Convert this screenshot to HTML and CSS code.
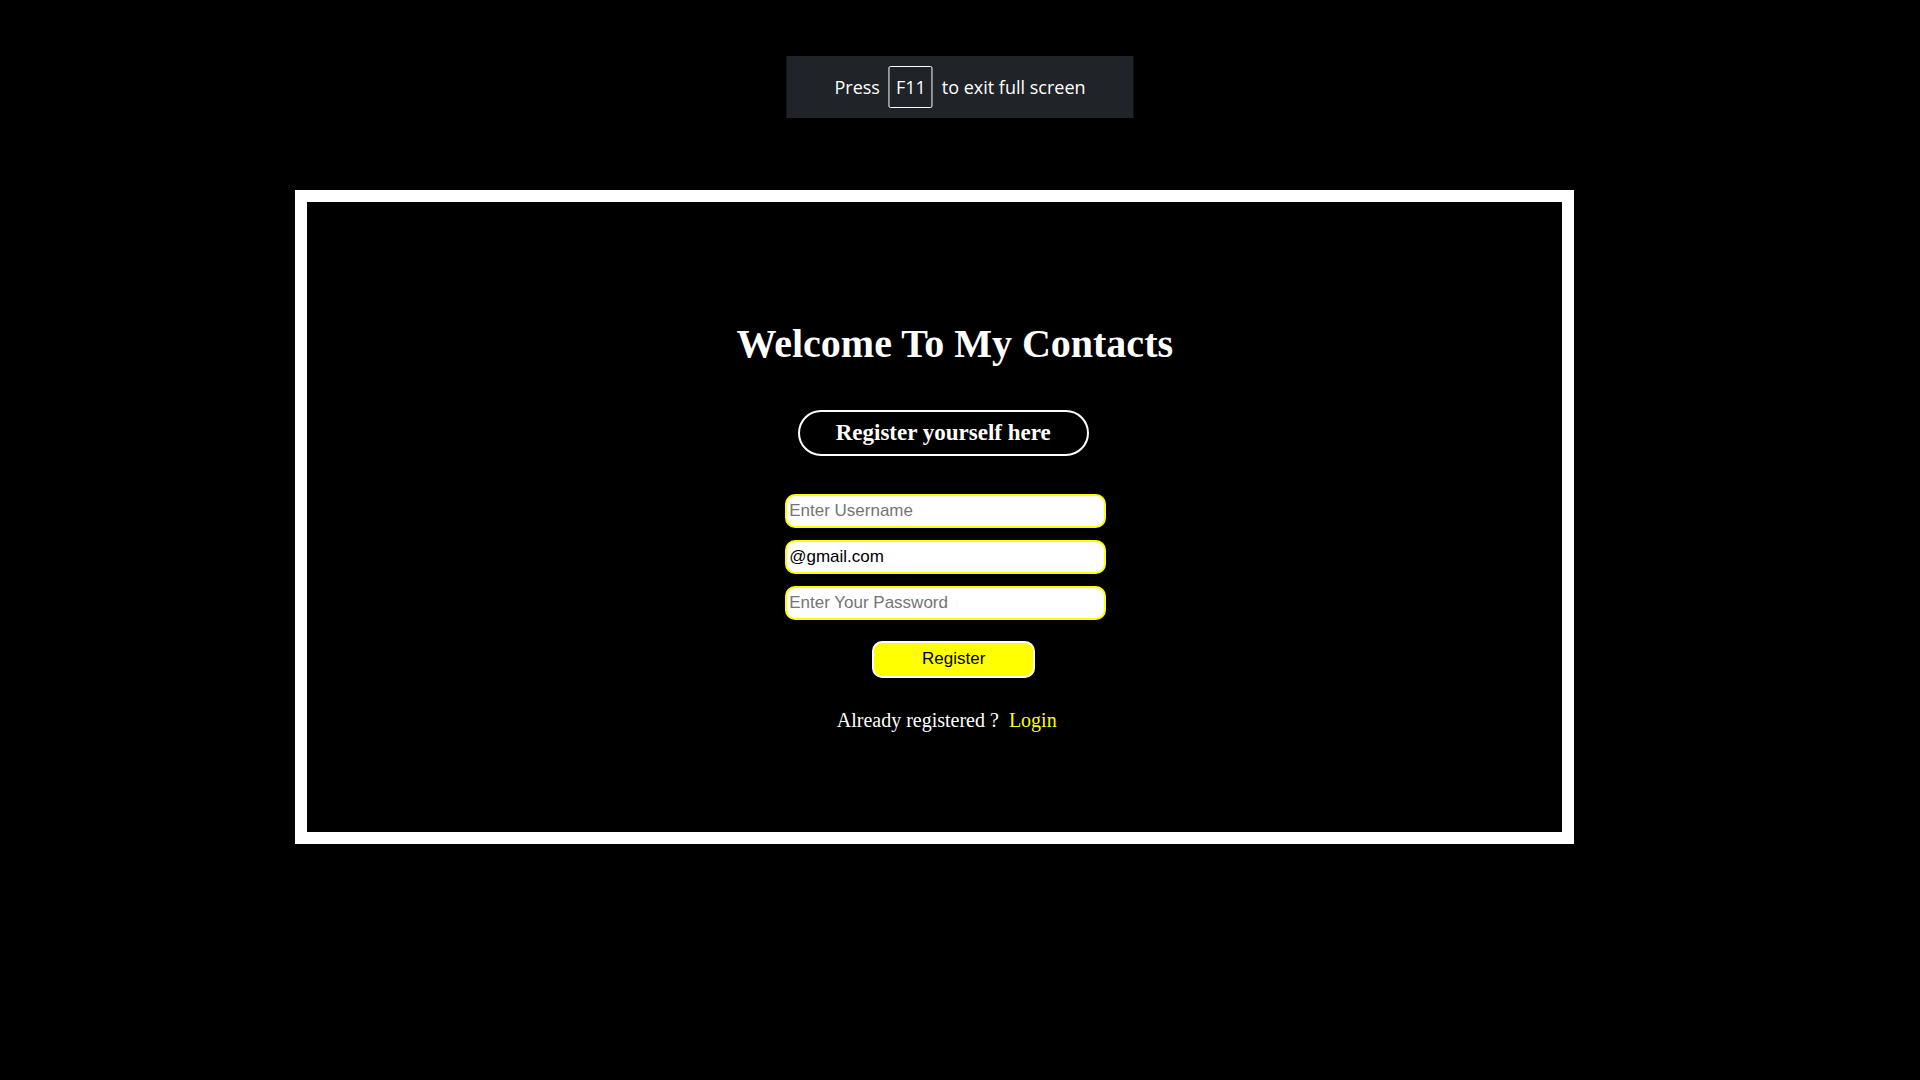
FILE: index.html
```html
<!DOCTYPE html>
<html lang="en">
<head>
  <meta charset="utf-8">
  <meta name="viewport" content="width=device-width, initial-scale=1">
  <title>My Contacts - Register</title>
  <link rel="stylesheet" href="styles.css">
</head>
<body>
  <div class="toast" role="status"><span>Press</span><kbd class="key">F11</kbd><span>to exit full screen</span></div>
  <main class="frame">
    <h1 class="title">Welcome To My Contacts</h1>
    <h2 class="subtitle">Register yourself here</h2>
    <form class="form">
      <input class="field" type="text" name="username" aria-label="Username" placeholder="Enter Username">
      <input class="field" type="text" name="email" aria-label="Email" value="@gmail.com">
      <input class="field" type="password" name="password" aria-label="Password" placeholder="Enter Your Password">
      <button class="submit" type="submit">Register</button>
    </form>
    <p class="footer">Already registered ? <a class="login" href="#login">Login</a></p>
  </main>
</body>
</html>
```
FILE: styles.css
```css
* {
  box-sizing: border-box;
}

body {
  margin: 0;
  padding: 190px 18% 0 295px;
  background: #000;
  color: #fff;
  font-family: "Liberation Serif", "Times New Roman", serif;
}

.toast {
  position: absolute;
  top: 56px;
  left: 50%;
  transform: translateX(-50%);
  display: flex;
  align-items: center;
  gap: 9px;
  padding: 10px 48px;
  background: #202327;
  font: 18px/24px "Open Sans", "Noto Sans", sans-serif;
  white-space: nowrap;
}

.key {
  padding: 8px 6px;
  border: 1px solid #fff;
  border-radius: 2px;
  font: inherit;
}

.frame {
  display: flex;
  flex-direction: column;
  align-items: center;
  padding: 118px 0 100px 22px;
  border: 12px solid #fff;
}

.title {
  margin: 0 0 42px 18px;
  font-size: 40px;
  line-height: 48px;
}

.subtitle {
  margin: 0 5px 38px 0;
  padding: 7px 36px;
  border: 2px solid #fff;
  border-radius: 24px;
  font-size: 23px;
  line-height: 28px;
}

.form {
  display: flex;
  flex-direction: column;
  align-items: center;
  gap: 12px;
}

.field {
  width: 321px;
  height: 34px;
  padding: 0 2px;
  border: 2px solid #ff0;
  border-radius: 10px;
  background: #fff;
  color: #000;
  font: 17px "Liberation Sans", Arial, sans-serif;
}

.field::placeholder {
  color: #757575;
}

.submit {
  width: 163px;
  height: 37px;
  margin: 9px 0 0 16px;
  padding: 0 0 2px;
  border: 2px solid #fff;
  border-radius: 10px;
  background: #ff0;
  color: #000;
  font: 17px "Liberation Sans", Arial, sans-serif;
}

.footer {
  margin: 30px 0 0 2px;
  font-size: 20px;
  line-height: 24px;
}

.login {
  margin-left: 5px;
  color: #ff0;
  text-decoration: none;
}
```
